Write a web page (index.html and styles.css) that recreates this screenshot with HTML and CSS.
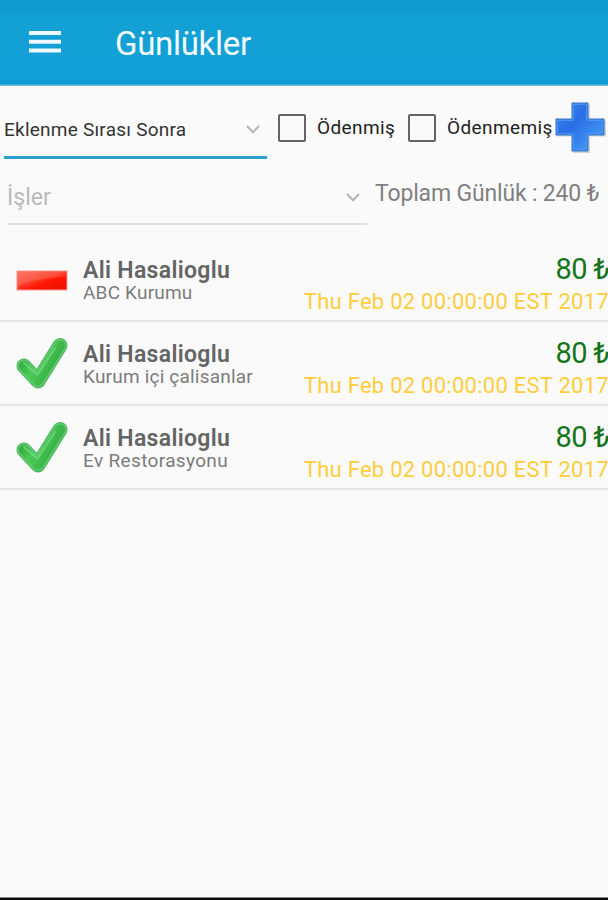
FILE: index.html
```html
<!DOCTYPE html>
<html lang="tr">
<head>
<meta charset="utf-8">
<title>Günlükler</title>
<link rel="stylesheet" href="styles.css">
</head>
<body>
<svg width="0" height="0" class="defs" aria-hidden="true">
  <defs>
    <linearGradient id="green" x1="0" y1="0" x2="1" y2="0.5">
      <stop offset="0" stop-color="#25a037"/><stop offset=".45" stop-color="#4ccb58"/><stop offset="1" stop-color="#36ad42"/>
    </linearGradient>
    <linearGradient id="red" x1="0" y1="0" x2="1" y2="1">
      <stop offset="0" stop-color="#ff6450"/><stop offset=".45" stop-color="#fc3822"/><stop offset=".6" stop-color="#ff1703"/><stop offset="1" stop-color="#e51200"/>
    </linearGradient>
    <linearGradient id="blue" x1="0" y1="0" x2="1" y2="1">
      <stop offset="0" stop-color="#3b82ee"/><stop offset=".4" stop-color="#2b6ee4"/><stop offset="1" stop-color="#48a5ff"/>
    </linearGradient>
    <symbol id="check" viewBox="0 0 52 52">
      <path d="M8 29 L22 44 L44 8.5" fill="none" stroke="#49b557" stroke-width="15" stroke-linecap="round" stroke-linejoin="round"/>
      <path d="M8 29 L22 43.5 L44 8.5" fill="none" stroke="#5fc870" stroke-width="13.5" stroke-linecap="round" stroke-linejoin="round"/>
      <path d="M8 29 L22 43.5 L44 8.5" fill="none" stroke="url(#green)" stroke-width="10" stroke-linecap="round" stroke-linejoin="round"/>
      <path d="M8 26 L21.5 37.5 L39 11" fill="none" stroke="#8be397" stroke-opacity=".5" stroke-width="2.2" stroke-linecap="round"/>
    </symbol>
    <symbol id="minus" viewBox="0 0 52 22">
      <rect x=".5" y=".5" width="51" height="20" fill="#ff9b90"/>
      <rect x="1.5" y="1.5" width="49" height="18" fill="url(#red)"/>
      <path d="M2 2H50V7C34 7 18 9 2 16Z" fill="#fff" fill-opacity=".13"/>
    </symbol>
  </defs>
</svg>
<div class="screen">
  <header class="appbar">
    <svg class="menu" viewBox="0 0 32 24"><path d="M1 3H31M1 11.7H31M1 20.4H31"/></svg>
    <h1>Günlükler</h1>
  </header>
  <section class="filters">
    <div class="sort"><span>Eklenme Sırası Sonra</span>
      <svg class="chevron" viewBox="0 0 14 9"><path d="M1 1L7 7.2L13 1"/></svg></div>
    <div class="option paid"><i class="box"></i><span>Ödenmiş</span></div>
    <div class="option unpaid"><i class="box"></i><span>Ödenmemiş</span></div>
    <svg class="plus" viewBox="0 0 52 54">
      <path class="plus-shadow" d="M19 3.5H36V19.5H52V35.5H36V52H19V35.5H3V19.5H19Z"/>
      <path class="plus-edge" d="M18 2H34V18H50V34H34V50H18V34H2V18H18Z"/>
      <path class="plus-shine" d="M19.2 3.2H32.8V19.2H48.8V32.8H32.8V48.8H19.2V32.8H3.2V19.2H19.2Z"/>
    </svg>
  </section>
  <section class="summary">
    <div class="jobs"><span>İşler</span>
      <svg class="chevron" viewBox="0 0 14 9"><path d="M1 1L7 7.2L13 1"/></svg></div>
    <div class="total">Toplam Günlük : 240 ₺</div>
  </section>
  <main>
    <article class="row">
      <div class="icon"><svg class="minus"><use href="#minus"/></svg></div>
      <div class="who"><div class="name">Ali Hasalioglu</div><div class="org">ABC Kurumu</div></div>
      <div class="info"><div class="amount">80 ₺</div><div class="date">Thu Feb 02 00:00:00 EST 2017</div></div>
    </article>
    <article class="row">
      <div class="icon"><svg class="check"><use href="#check"/></svg></div>
      <div class="who"><div class="name">Ali Hasalioglu</div><div class="org">Kurum içi çalisanlar</div></div>
      <div class="info"><div class="amount">80 ₺</div><div class="date">Thu Feb 02 00:00:00 EST 2017</div></div>
    </article>
    <article class="row">
      <div class="icon"><svg class="check"><use href="#check"/></svg></div>
      <div class="who"><div class="name">Ali Hasalioglu</div><div class="org wide">Ev Restorasyonu</div></div>
      <div class="info"><div class="amount">80 ₺</div><div class="date">Thu Feb 02 00:00:00 EST 2017</div></div>
    </article>
  </main>
</div>
</body>
</html>
```
FILE: styles.css
```css
* { box-sizing: border-box; }
body { margin: 0; background: #fafafa; font-family: Roboto, "Noto Sans", sans-serif; }
svg { display: block; flex: none; }
.defs { position: absolute; }
.screen { width: 608px; height: 900px; overflow: hidden; display: flex; flex-direction: column; border-bottom: 2px solid #0a0a0a; box-shadow: inset 0 -1px #888; white-space: nowrap; }
.appbar { height: 86px; flex: none; display: flex; align-items: center; padding-left: 29px; background: linear-gradient(#0f98cb 0, #12a0d5 18px, #12a0d6 80px, #0999cd 84px, #72bfdd 85px); }
.menu { width: 32px; height: 24px; margin: -2px 54px 0 0; }
.menu path { stroke: #eefaff; stroke-width: 4; stroke-linecap: round; }
h1 { margin: 2px 0 0; color: #f2fbff; font-size: 33px; font-weight: 400; line-height: 40px; letter-spacing: -.3px; }
.filters { height: 73px; flex: none; display: flex; padding-left: 4px; }
.sort { width: 263px; height: 73px; display: flex; align-items: center; justify-content: space-between; border-bottom: 3px solid #2e9fca; color: #333; font-size: 19px; letter-spacing: .23px; padding: 17px 7px 0 0; }
.chevron { width: 14px; height: 9px; }
.chevron path { fill: none; stroke: #b5b5b5; stroke-width: 2; }
.option { display: flex; align-items: center; height: 28px; margin-top: 28px; font-size: 19px; letter-spacing: .4px; color: #222; }
.option span { margin-top: -1px; }
.box { width: 28px; height: 28px; border: 2px solid #656565; border-radius: 2px; margin-right: 11px; flex: none; }
.paid { width: 130px; margin-left: 11px; }
.unpaid { width: 146px; }
.plus { width: 52px; height: 54px; margin-top: 15px; }
.plus-shadow { fill: #9cabc0; opacity: .45; }
.plus-edge { fill: #3373c8; stroke: #3373c8; stroke-linejoin: round; }
.plus-shine { fill: url(#blue); stroke: #579ff6; stroke-width: 1; }
.summary { height: 79px; flex: none; display: flex; padding-left: 7px; }
.jobs { width: 360px; height: 66px; display: flex; align-items: center; justify-content: space-between; border-bottom: 2px solid #e0e0e0; padding: 12px 7px 0 0; font-size: 23px; color: #b9b9b9; }
.total { margin: 21px 0 0 8px; line-height: 28px; font-size: 23px; letter-spacing: -.17px; color: #808080; }
.row { height: 84px; display: flex; border-bottom: 2px solid #e6e6e6; }
.icon { width: 83px; padding-left: 16px; display: flex; align-items: center; }
.minus { width: 52px; height: 22px; margin-top: 3px; }
.check { width: 52px; height: 52px; }
.who { flex: 1; padding-top: 20px; }
.name { font-size: 23px; line-height: 26px; font-weight: 600; letter-spacing: .32px; color: #646464; }
.org { font-size: 19px; line-height: 17px; letter-spacing: .2px; color: #7c7c7c; }
.wide { letter-spacing: .35px; }
.info { width: 305px; display: flex; flex-direction: column; align-items: flex-end; padding-top: 13px; }
.amount { font-size: 29px; line-height: 36px; letter-spacing: -.6px; margin-right: -1px; color: #137518; }
.date { font-size: 22px; line-height: 30px; letter-spacing: .26px; margin-right: -1px; color: #ffcd3c; }
```
